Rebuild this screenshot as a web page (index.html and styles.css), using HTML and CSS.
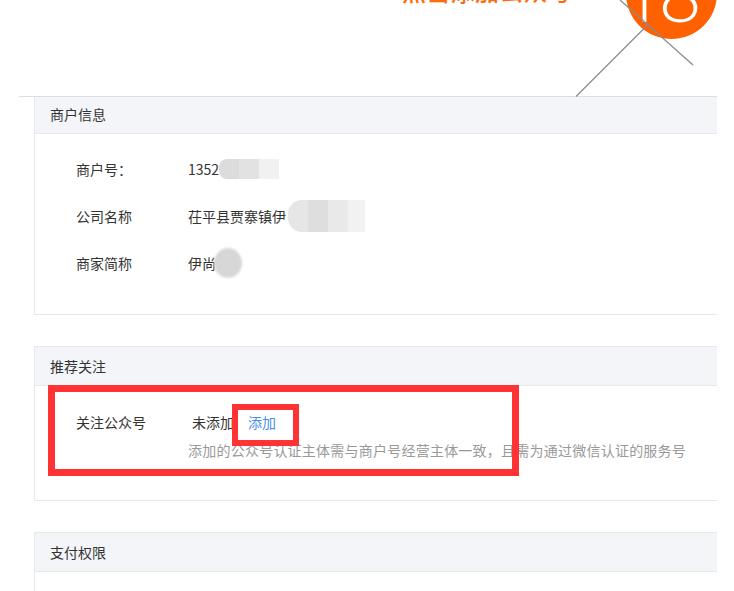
FILE: index.html
```html
<!DOCTYPE html>
<html lang="zh-CN">
<head>
<meta charset="utf-8">
<title>商户信息</title>
<link rel="stylesheet" href="styles.css">
</head>
<body>
<div class="annot">
  <div class="annot-title">点击添加公众号</div>
  <div class="annot-badge"><span class="annot-num">18</span></div>
  <svg class="annot-lines" width="734" height="100" viewBox="0 0 734 100">
    <line x1="620" y1="0" x2="693" y2="65" stroke="#8c8c8c" stroke-width="1.3"/>
    <line x1="648.5" y1="24" x2="576" y2="96.5" stroke="#8c8c8c" stroke-width="1.3"/>
  </svg>
</div>
<div class="wrap">
  <section class="panel panel-first">
    <div class="panel-head panel-head-first">商户信息</div>
    <div class="panel-body info-body">
      <div class="row"><span class="label">商户号：</span><span class="value">1352<span class="mosaic m1"><i class="c1"></i><i class="c2"></i><i class="c3"></i></span></span></div>
      <div class="row"><span class="label">公司名称</span><span class="value">茌平县贾寨镇伊<span class="mosaic m2"><i class="c1"></i><i class="c2"></i><i class="c3"></i><i class="c4"></i></span></span></div>
      <div class="row"><span class="label">商家简称</span><span class="value">伊尚<span class="mosaic m3"></span></span></div>
    </div>
  </section>
  <section class="panel">
    <div class="panel-head">推荐关注</div>
    <div class="panel-body follow-body">
      <div class="follow-row">
        <span class="label">关注公众号</span>
        <div class="follow-main">
          <div class="follow-status"><span class="status">未添加</span><a class="link">添加</a></div>
          <div class="hint">添加的公众号认证主体需与商户号经营主体一致，且需为通过微信认证的服务号</div>
        </div>
      </div>
      <div class="mark mark-big"></div>
      <div class="mark mark-small"></div>
    </div>
  </section>
  <section class="panel panel-last">
    <div class="panel-head">支付权限</div>
    <div class="panel-body last-body"></div>
  </section>
</div>
</body>
</html>
```

FILE: styles.css
```css
* { box-sizing: border-box; }
html, body { margin: 0; padding: 0; background: #fff; }
body {
  font-family: "Noto Sans CJK SC", "Microsoft YaHei", "Noto Sans", sans-serif;
  font-size: 14px;
  color: #333;
  width: 734px;
  height: 591px;
  overflow: hidden;
}

/* annotation overlay area */
.annot {
  position: relative;
  height: 96px;
}
.annot-title {
  position: absolute;
  left: 402px;
  top: -26px;
  font-size: 24px;
  line-height: 34px;
  font-weight: 500;
  color: #ff6a0e;
  letter-spacing: 0.3px;
  white-space: nowrap;
}
.annot-badge {
  position: absolute;
  left: 626px;
  top: -52px;
  width: 91px;
  height: 91px;
  border-radius: 50%;
  background: #ff6000;
  overflow: hidden;
}
.annot-num {
  position: absolute;
  left: -5px;
  top: 7px;
  font-family: "Open Sans", "DejaVu Sans", sans-serif;
  font-weight: 300;
  font-size: 76px;
  line-height: 76px;
  color: #fff;
  letter-spacing: -6px;
  white-space: nowrap;
}
.annot-lines {
  position: absolute;
  left: 0;
  top: 0;
}

/* main */
.wrap {
  margin-left: 19px;
  width: 698px;
  border-top: 1px solid #dcdee4;
  padding-left: 15px;
}
.panel {
  border-left: 1px solid #e6e8ee;
  border-bottom: 1px solid #e6e8ee;
  margin-bottom: 31px;
}
.panel:not(.panel-first) {
  border-top: 1px solid #e6e8ee;
}
.panel-last { border-bottom: 0; margin-bottom: 0; }
.panel-head {
  height: 39px;
  line-height: 39px;
  padding-left: 15px;
  background: #f4f5f9;
  border-bottom: 1px solid #e6e8ee;
  color: #333;
}
.panel-head-first {
  height: 37px;
  line-height: 34px;
}
.panel-body { position: relative; }

.info-body {
  padding: 11px 0 28px 41px;
}
.row {
  display: flex;
  align-items: center;
  height: 47px;
}
.label {
  width: 112px;
  flex: none;
}
.value {
  display: flex;
  align-items: center;
}

.mosaic {
  display: inline-flex;
  filter: blur(0.6px);
}
.mosaic i { display: block; }
.m1 { margin-left: 0; height: 20px; }
.m1 .c1 { width: 20px; background: #dcdcdc; border-radius: 8px 0 0 8px; }
.m1 .c2 { width: 20px; background: #e2e2e2; }
.m1 .c3 { width: 20px; background: #f1f1f1; }
.m2 { margin-left: 2px; height: 32px; border-radius: 14px 0 0 14px; overflow: hidden; }
.m2 .c1 { width: 20px; background: #e6e6e6; }
.m2 .c2 { width: 20px; background: #dedede; }
.m2 .c3 { width: 20px; background: #e9e9e9; }
.m2 .c4 { width: 17px; background: #f2f2f2; }
.m3 {
  margin-left: -2px;
  width: 28px;
  height: 30px;
  border-radius: 50%;
  background: #d7d7d7;
  filter: blur(1px);
}

.follow-body {
  height: 114px;
  padding: 26px 0 0 41px;
}
.follow-row {
  display: flex;
  align-items: flex-start;
}
.follow-row .label { line-height: 20px; }
.follow-main { display: flex; flex-direction: column; }
.follow-status {
  display: flex;
  line-height: 20px;
  padding-left: 4px;
}
.status { color: #333; }
.link { color: #4a8fe7; margin-left: 14px; cursor: pointer; }
.hint {
  margin-top: 8px;
  color: #999;
  line-height: 20px;
  letter-spacing: 0.23px;
  white-space: nowrap;
}

/* red highlight annotations */
.mark {
  position: absolute;
  border: 7px solid #ff3333;
  pointer-events: none;
}
.mark-big {
  left: 13px;
  top: -1px;
  width: 471px;
  height: 91px;
}
.mark-small {
  left: 197px;
  top: 18px;
  width: 67px;
  height: 42px;
  border-width: 6px;
}

.last-body { height: 30px; }
```
